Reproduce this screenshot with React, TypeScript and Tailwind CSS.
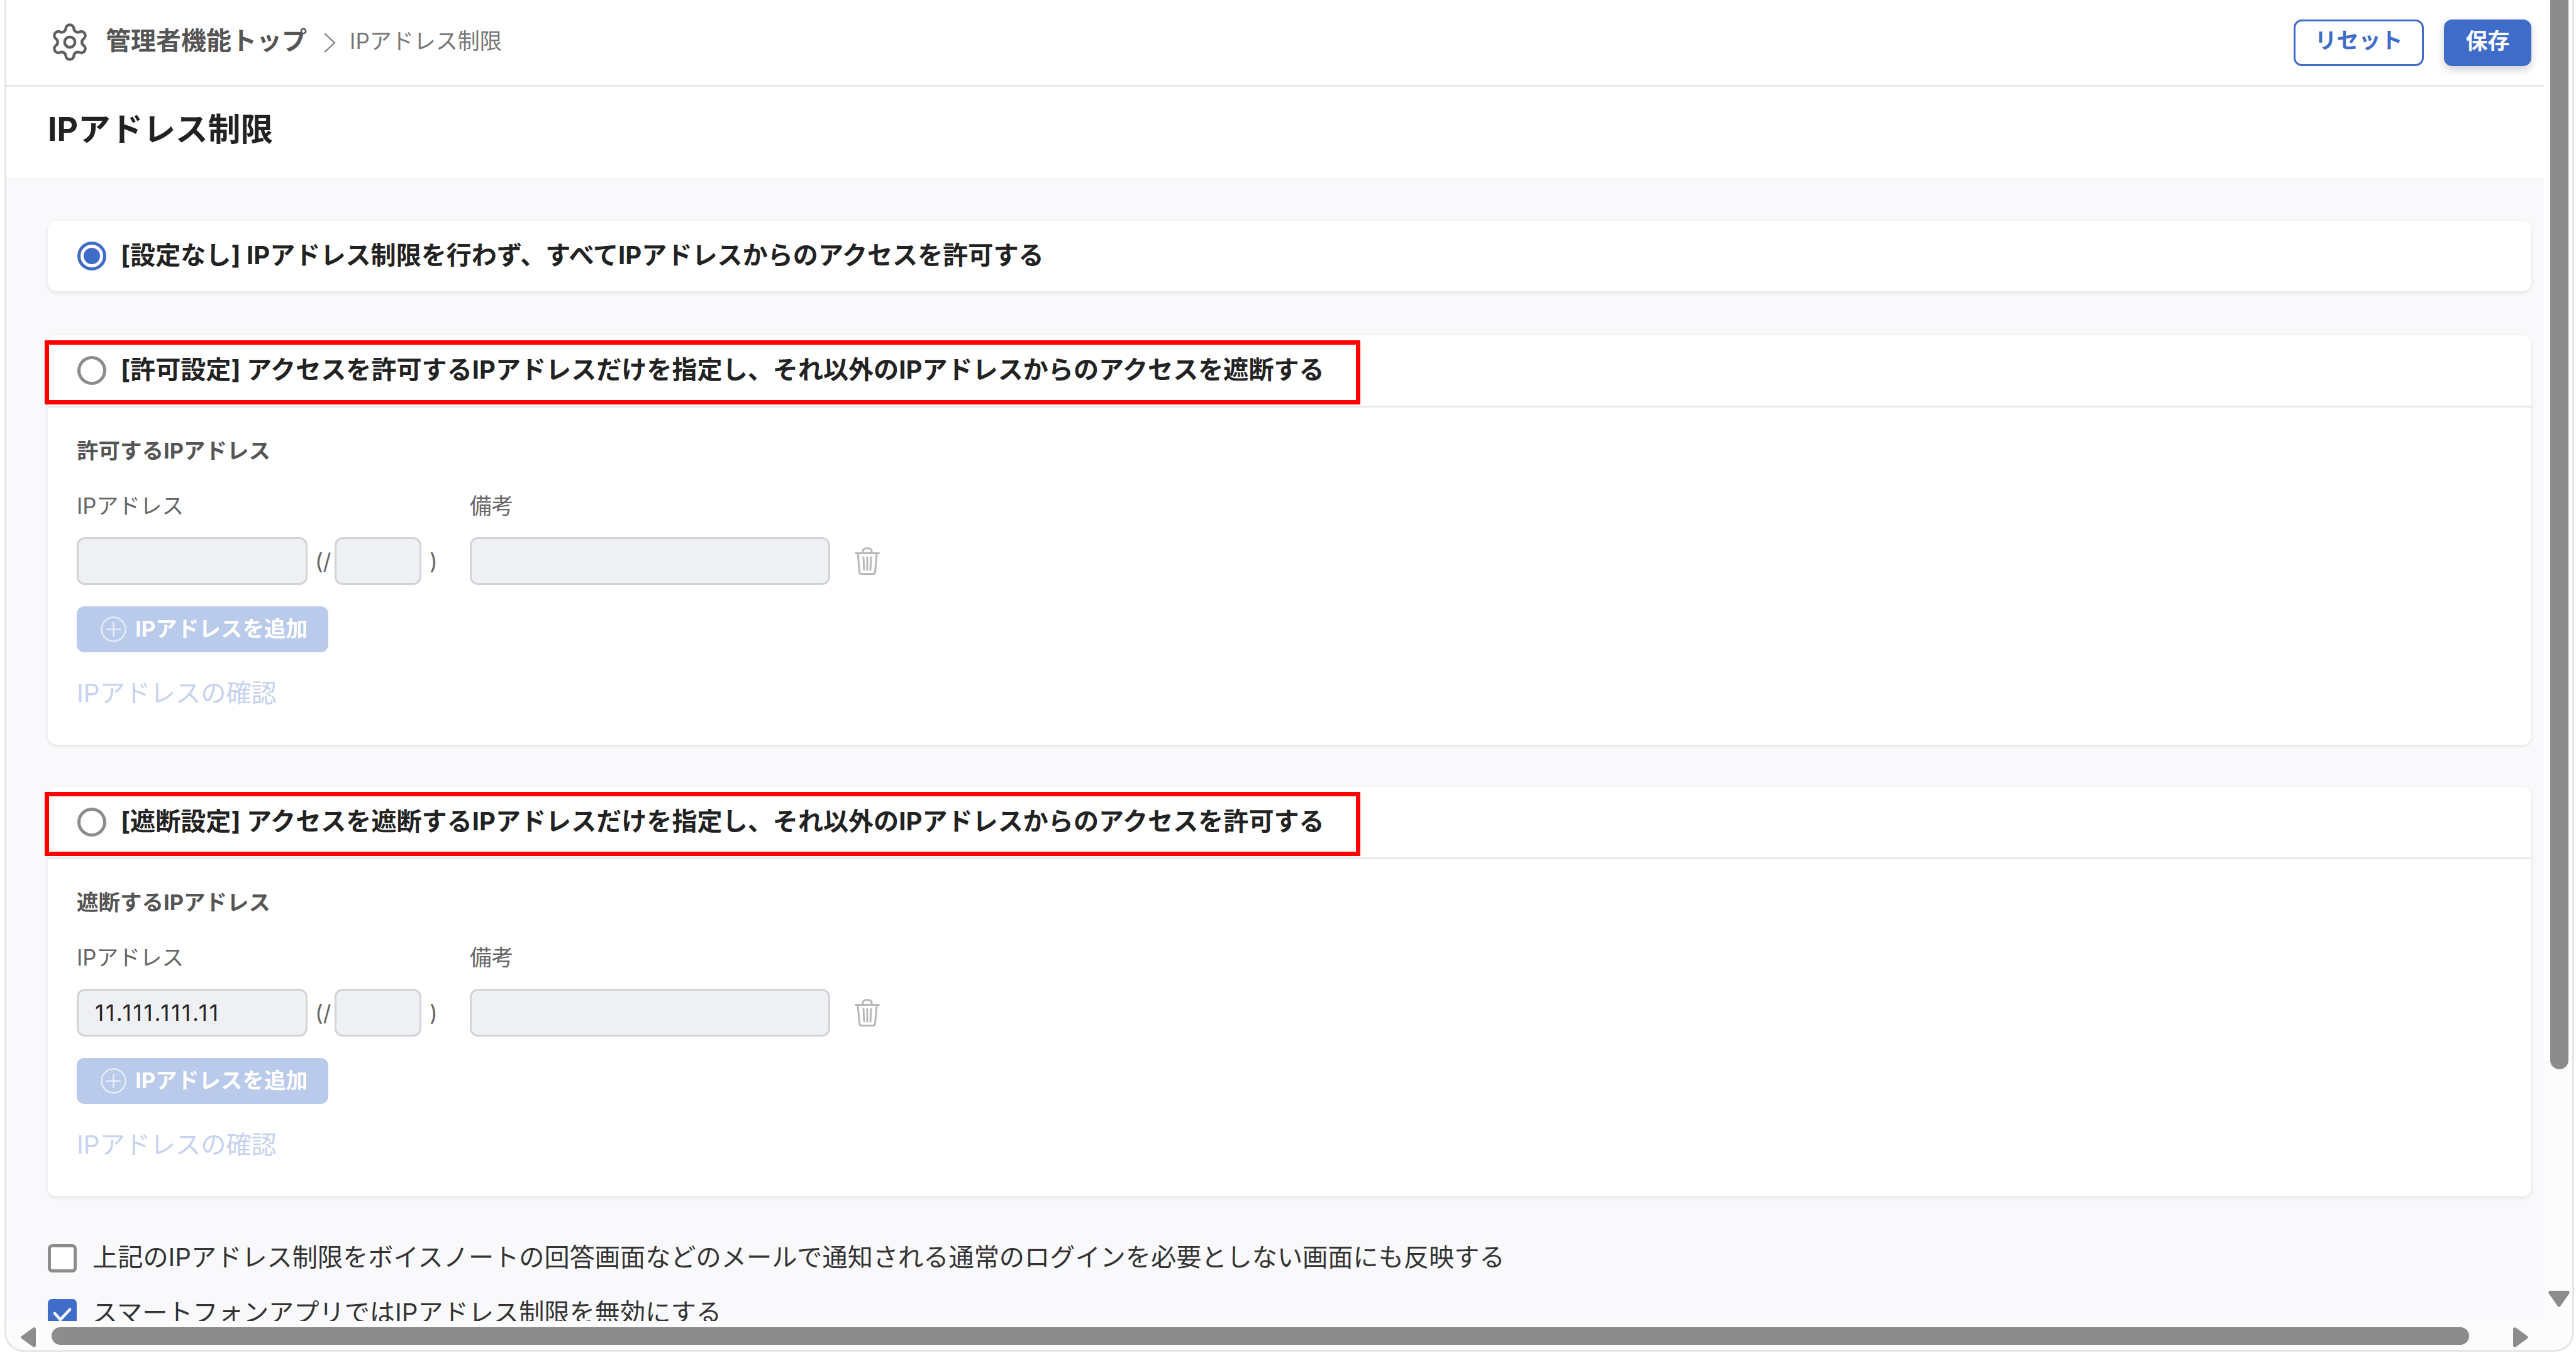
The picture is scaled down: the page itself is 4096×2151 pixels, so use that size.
import { Settings } from "lucide-react";

function Radio({ checked }: { checked?: boolean }) {
  if (checked) {
    return (
      <span className="flex h-[46px] w-[46px] shrink-0 items-center justify-center rounded-full border-[5px] border-[#3f6cc9] bg-white">
        <span className="h-[26px] w-[26px] rounded-full bg-[#3f6cc9]" />
      </span>
    );
  }
  return <span className="h-[46px] w-[46px] shrink-0 rounded-full border-[5px] border-[#8c8c8c] bg-white" />;
}

function Trash() {
  return (
    <svg width="40" height="44" viewBox="0 0 40 44" fill="none" stroke="#b9b9bd" strokeWidth="3" strokeLinecap="round" strokeLinejoin="round">
      <path d="M1.5 9.5h37" />
      <path d="M13 9V6.5C13 3.5 15.5 1.5 20 1.5s7 2 7 5V9" />
      <path d="M5 10l2.5 29c.2 2 1.5 3.5 3.5 3.5h18c2 0 3.3-1.5 3.5-3.5L35 10" />
      <path d="M14 16l1 20M20 16v20M26 16l-1 20" />
    </svg>
  );
}

function IpCard({ title, listLabel, ip }: { title: string; listLabel: string; ip?: string }) {
  return (
    <div className="rounded-[14px] bg-white shadow-[0_2px_6px_rgba(0,0,0,0.1)]">
      <div className="relative flex h-[115px] items-center gap-[23px] border-b-[3px] border-[#e8e9ec] pl-[47px]">
        <Radio />
        <span className="-mt-[3px] text-[40.1px] font-bold leading-[48px] text-[#222]">{title}</span>
        {/* annotation frame */}
        <div className="absolute left-[-5px] top-[8px] h-[102px] w-[2092px] border-[7px] border-[#ff0000]" />
      </div>
      <div className="px-[46px] pb-[58px] pt-[47px]">
        <div className="text-[34.5px] font-bold leading-[44px] text-[#555]">{listLabel}</div>
        <div className="mt-[43px] flex text-[34.7px] leading-[44px] text-[#666]">
          <div className="w-[625px]">IPアドレス</div>
          <div>備考</div>
        </div>
        <div className="mt-[28px] flex items-center text-[35px] text-[#666]">
          <div className="flex h-[76px] w-[367px] items-center rounded-[13px] border-[3px] border-[#d2d3d6] bg-[#eff0f4] pl-[26px] tracking-[2.7px] text-[#222]">
            {ip}
          </div>
          <span className="w-[43px] pl-[12px]">(/</span>
          <div className="h-[76px] w-[138px] rounded-[13px] border-[3px] border-[#d2d3d6] bg-[#eff0f4]" />
          <span className="w-[77px] pl-[13px]">)</span>
          <div className="h-[76px] w-[573px] rounded-[13px] border-[3px] border-[#d2d3d6] bg-[#eff0f4]" />
          <div className="ml-[39px]">
            <Trash />
          </div>
        </div>
        <div className="mt-[34px] flex h-[73px] w-[400px] items-center gap-[14px] rounded-[12px] bg-[#b9caeb] pl-[38px] text-[34.6px] font-bold text-white">
          <svg width="41" height="41" viewBox="0 0 41 41" fill="none" stroke="#e6ecf8" strokeWidth="2.5">
            <circle cx="20.5" cy="20.5" r="19" />
            <path d="M20.5 9v23M9 20.5h23" />
          </svg>
          <span className="-mt-[1px]">IPアドレスを追加</span>
        </div>
        <div className="mt-[41px] text-[40.2px] leading-[48px] text-[#c6d2ee]">IPアドレスの確認</div>
      </div>
    </div>
  );
}

export default function App() {
  return (
    <div
      className="relative h-[2151px] w-[4096px] overflow-hidden bg-white"
      style={{ fontFamily: '"Inter", "Noto Sans CJK JP", sans-serif' }}
    >
      {/* window frame */}
      <div className="relative ml-[7px] h-[2149px] w-[4086px] overflow-hidden rounded-b-[30px] border-b-[3px] border-l-[3px] border-r-[3px] border-[#e6e6e6] bg-[#fcfcfd]">
        <div className="h-[2100px] w-[4035px] overflow-hidden bg-[#f9f9fb]">
          {/* top bar */}
          <div className="flex h-[138px] items-center justify-between border-b-[3px] border-[#eaeaea] bg-white pl-[68px] pr-[20px]">
            <div className="flex items-center text-[#555]">
              <Settings className="mt-[-2px]" size={66} strokeWidth={1.6} color="#5f5f5f" />
              <span className="-mt-[6px] ml-[24px] text-[40px] font-bold">管理者機能トップ</span>
              <svg className="ml-[26px]" width="20" height="32" viewBox="0 0 20 32" fill="none" stroke="#777" strokeWidth="2">
                <path d="M2 1l16 15L2 31" />
              </svg>
              <span className="-mt-[4px] ml-[22px] text-[35px] text-[#777]">IPアドレス制限</span>
            </div>
            <div className="flex items-center gap-[32px]">
              <button className="h-[74px] w-[207px] rounded-[13px] border-[3px] border-[#3f6cc9] bg-white pb-[6px] text-[35px] font-bold text-[#3f6cc9]">
                リセット
              </button>
              <button className="h-[74px] w-[139px] rounded-[13px] bg-[#3f6cc9] pb-[4px] text-[35px] font-bold text-white shadow-[0_6px_14px_rgba(0,0,0,0.18)]">
                保存
              </button>
            </div>
          </div>

          {/* page title */}
          <div className="flex h-[144px] items-center bg-white pb-[8px] pl-[66px] text-[51.7px] font-bold text-[#222]">
            IPアドレス制限
          </div>

          <div className="pl-[66px] pr-[20px] pt-[69px]">
            <div className="flex h-[112px] items-center gap-[23px] rounded-[14px] bg-white pl-[47px] shadow-[0_2px_6px_rgba(0,0,0,0.1)]">
              <Radio checked />
              <span className="-mt-[3px] text-[40.1px] font-bold leading-[48px] text-[#222]">
                [設定なし] IPアドレス制限を行わず、すべてIPアドレスからのアクセスを許可する
              </span>
            </div>

            <div className="mt-[70px]">
              <IpCard
                title="[許可設定] アクセスを許可するIPアドレスだけを指定し、それ以外のIPアドレスからのアクセスを遮断する"
                listLabel="許可するIPアドレス"
              />
            </div>
            <div className="mt-[67px]">
              <IpCard
                title="[遮断設定] アクセスを遮断するIPアドレスだけを指定し、それ以外のIPアドレスからのアクセスを許可する"
                listLabel="遮断するIPアドレス"
                ip="11.111.111.11"
              />
            </div>

            <div className="mt-[75px] flex items-center gap-[25px] text-[40.2px] leading-[48px] text-[#333]">
              <span className="h-[45px] w-[46px] shrink-0 rounded-[7px] border-[5px] border-[#8c8c8c] bg-white" />
              <span className="-mt-[2px]">上記のIPアドレス制限をボイスノートの回答画面などのメールで通知される通常のログインを必要としない画面にも反映する</span>
            </div>
            <div className="mt-[40px] flex items-center gap-[25px] text-[40.2px] leading-[48px] text-[#333]">
              <span className="flex h-[45px] w-[46px] shrink-0 items-center justify-center rounded-[7px] bg-[#3f6cc9]">
                <svg className="mt-[6px]" width="32" height="24" viewBox="0 0 32 24" fill="none" stroke="white" strokeWidth="4.5" strokeLinecap="round" strokeLinejoin="round">
                  <path d="M4 10l9 10L28 4" />
                </svg>
              </span>
              <span>スマートフォンアプリではIPアドレス制限を無効にする</span>
            </div>
          </div>
        </div>

        {/* scrollbars */}
        <div className="absolute left-[4045px] top-0 h-[1700px] w-[29px] rounded-b-[15px] bg-[#8c8c8c]" />
        <svg className="absolute left-[4042px] top-[2052px]" width="34" height="26" viewBox="0 0 34 26" fill="#8c8c8c">
          <path d="M3 0h28c2 0 3.500 2 2.500 4L19.500 24c-1 2-4 2-5 0L.5 4C-.5 2 1 0 3 0z" />
        </svg>
        <div className="absolute left-[72px] top-[2110px] h-[28px] w-[3844px] rounded-[14px] bg-[#8c8c8c]" />
        <svg className="absolute left-[23px] top-[2110px]" width="24" height="32" viewBox="0 0 24 32" fill="#8c8c8c">
          <path d="M24 3v26c0 2-2 3.500-4 2.500L1.500 18c-2-1-2-3 0-4L20 .5C22-.5 24 1 24 3z" />
        </svg>
        <svg className="absolute left-[3986px] top-[2110px]" width="24" height="32" viewBox="0 0 24 32" fill="#8c8c8c">
          <path d="M0 3v26c0 2 2 3.500 4 2.500L22.500 18c2-1 2-3 0-4L4 .5C2-.5 0 1 0 3z" />
        </svg>
      </div>
    </div>
  );
}
